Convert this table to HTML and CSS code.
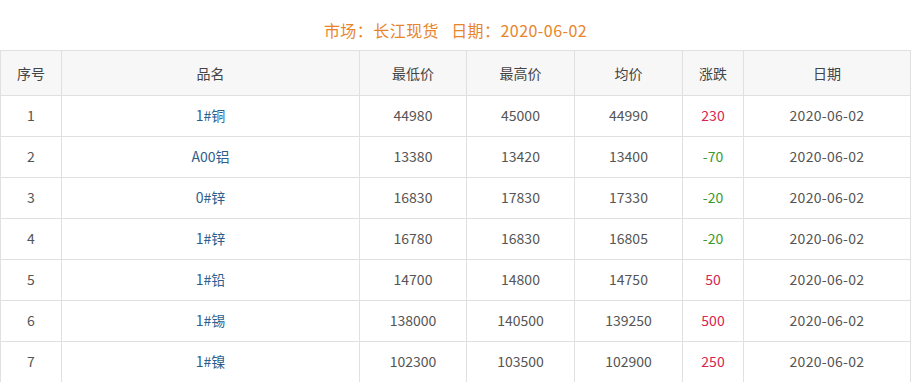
FILE: index.html
```html
<!DOCTYPE html>
<html>
<head>
<meta charset="utf-8">
<link rel="stylesheet" href="styles.css">
</head>
<body>
<div class="title">市场：长江现货&nbsp;&nbsp;&nbsp;日期：2020-06-02</div>
<table class="grid">
<colgroup>
<col class="c-no"><col class="c-name"><col class="c-low"><col class="c-high"><col class="c-avg"><col class="c-chg"><col class="c-date">
</colgroup>
<thead>
<tr><th>序号</th><th>品名</th><th>最低价</th><th>最高价</th><th>均价</th><th>涨跌</th><th>日期</th></tr>
</thead>
<tbody>
<tr><td>1</td><td class="name">1#铜</td><td>44980</td><td>45000</td><td>44990</td><td class="up">230</td><td class="date">2020-06-02</td></tr>
<tr><td>2</td><td class="name">A00铝</td><td>13380</td><td>13420</td><td>13400</td><td class="down">-70</td><td class="date">2020-06-02</td></tr>
<tr><td>3</td><td class="name">0#锌</td><td>16830</td><td>17830</td><td>17330</td><td class="down">-20</td><td class="date">2020-06-02</td></tr>
<tr><td>4</td><td class="name">1#锌</td><td>16780</td><td>16830</td><td>16805</td><td class="down">-20</td><td class="date">2020-06-02</td></tr>
<tr><td>5</td><td class="name">1#铅</td><td>14700</td><td>14800</td><td>14750</td><td class="up">50</td><td class="date">2020-06-02</td></tr>
<tr><td>6</td><td class="name">1#锡</td><td>138000</td><td>140500</td><td>139250</td><td class="up">500</td><td class="date">2020-06-02</td></tr>
<tr><td>7</td><td class="name">1#镍</td><td>102300</td><td>103500</td><td>102900</td><td class="up">250</td><td class="date">2020-06-02</td></tr>
</tbody>
</table>
</body>
</html>
```
FILE: styles.css
```css
html, body {
  margin: 0;
  padding: 0;
  background: #fff;
}
body {
  font-family: "Noto Sans CJK SC", "Noto Sans", sans-serif;
  font-size: 14px;
  color: #555;
}
.title {
  height: 50px;
  line-height: 60px;
  text-align: center;
  color: #e8852c;
  font-size: 16px;
  letter-spacing: 0.45px;
}
.grid {
  border-collapse: collapse;
  width: 910px;
  table-layout: fixed;
}
.c-no { width: 61px; }
.c-name { width: 298px; }
.c-low { width: 107px; }
.c-high { width: 108px; }
.c-avg { width: 108px; }
.c-chg { width: 61px; }
.c-date { width: 167px; }
.grid th, .grid td {
  border: 1px solid #e0e0e0;
  text-align: center;
  padding: 0;
  font-weight: normal;
}
.grid th {
  height: 44px;
  background: #f7f7f7;
  color: #444;
}
.grid td {
  height: 37px;
  padding-bottom: 3px;
}
.grid .date { letter-spacing: 0.3px; }
.grid .name { color: #2d5f8e; }
.grid .up { color: #d9254f; }
.grid .down { color: #3a9a2c; }
```
